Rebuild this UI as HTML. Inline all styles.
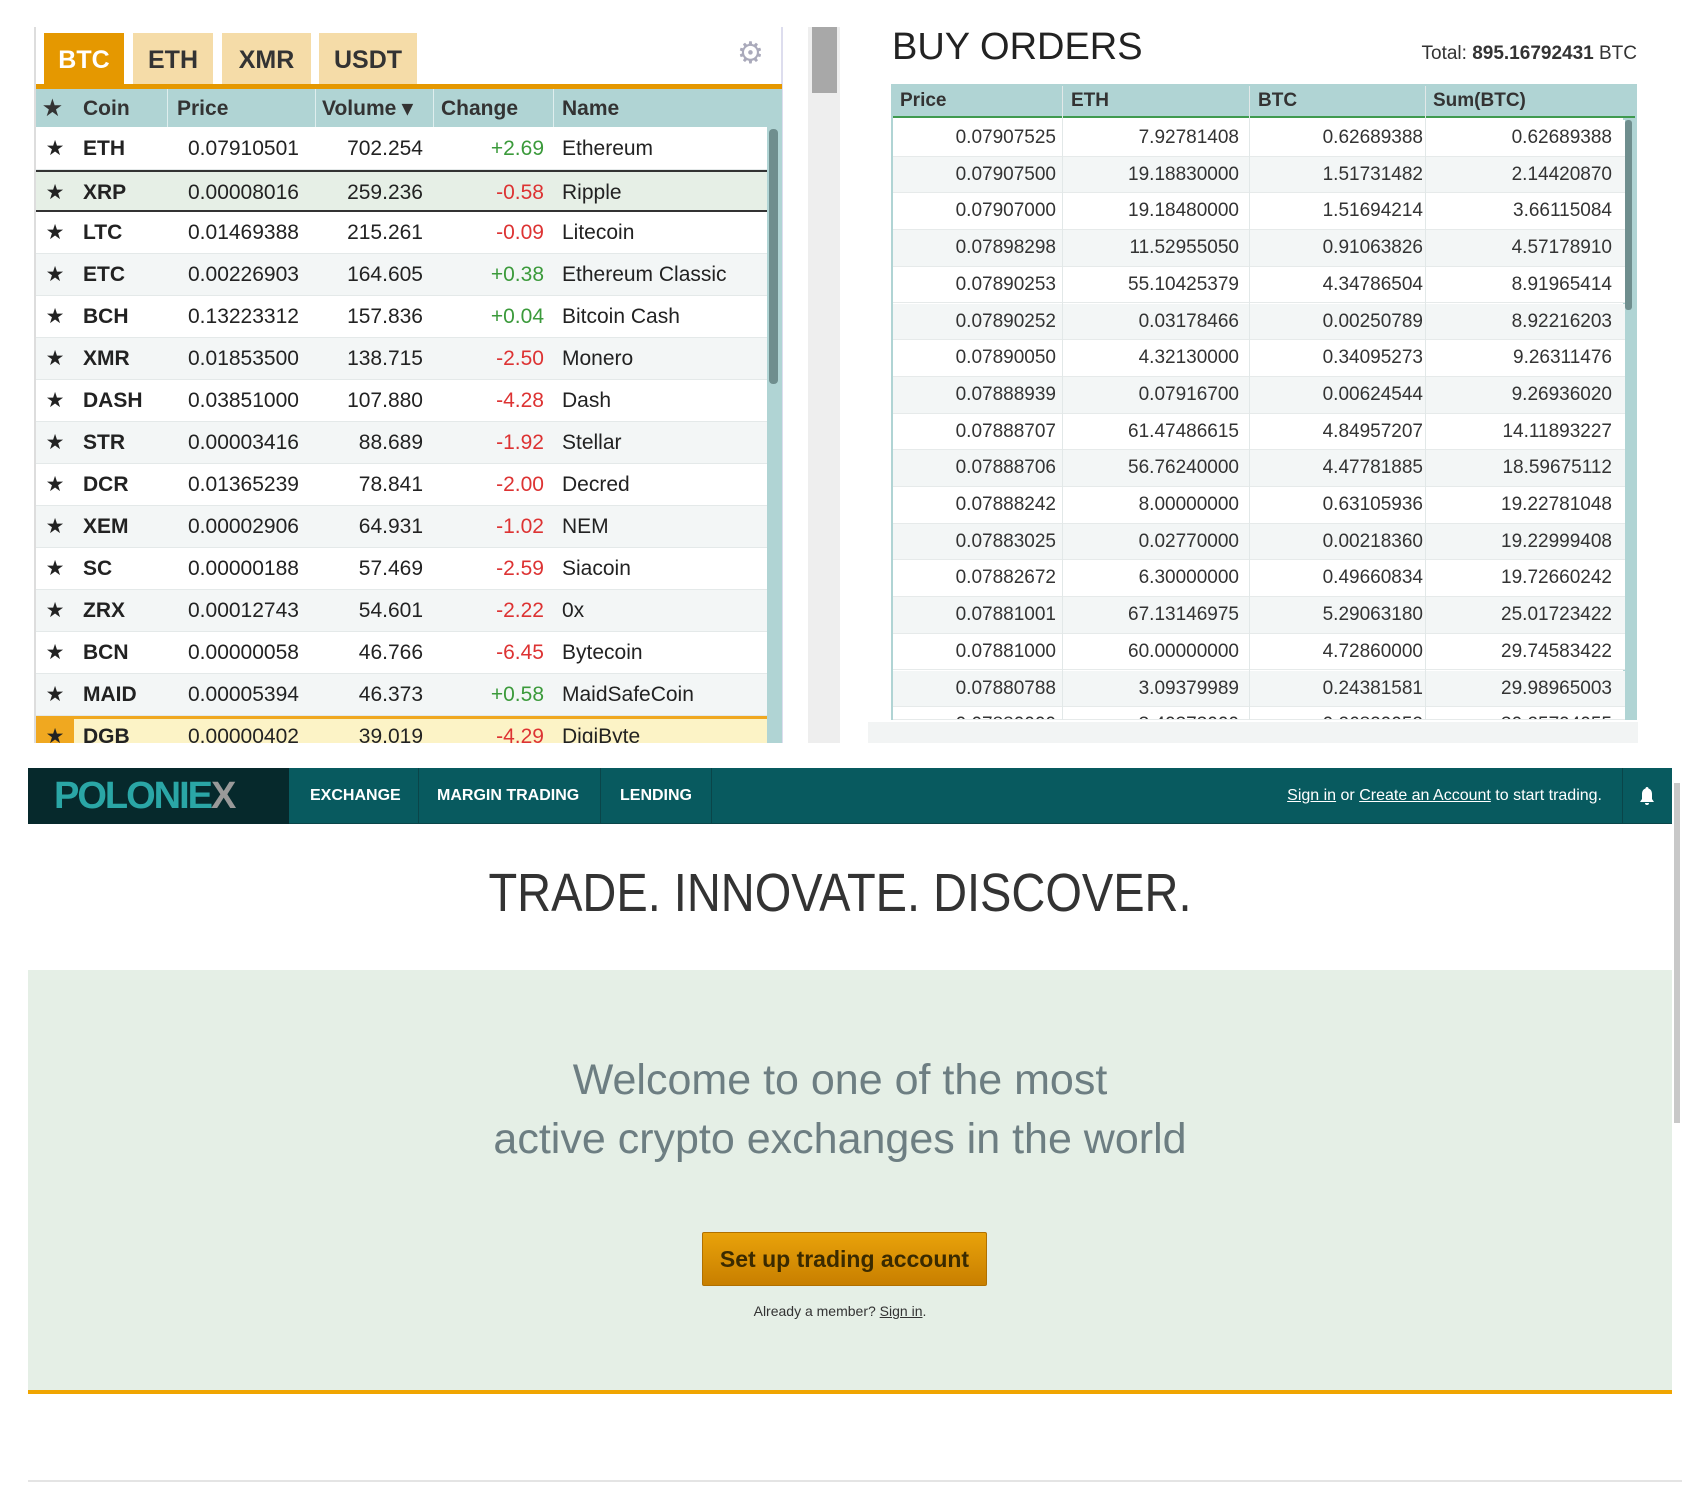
<!DOCTYPE html>
<html><head><meta charset="utf-8"><style>
*{margin:0;padding:0;box-sizing:border-box}
body{width:1702px;height:1507px;background:#fff;font-family:"Liberation Sans",sans-serif;position:relative;overflow:hidden;color:#222}
.abs{position:absolute}
.tab{position:absolute;top:33px;height:52px;background:#f5dca8;color:#333;font-weight:bold;font-size:25px;text-align:center;line-height:54px}
.lrow{position:absolute;left:36px;width:731px;height:42px;font-size:21px;line-height:42px;border-bottom:1px solid #e4e9e9}
.lrow span{position:absolute;top:0}
.c0{left:7px;width:24px;text-align:center}
.c1{left:47px;font-weight:bold}
.c2{left:152px}
.c3{left:240px;width:147px;text-align:right}
.c4{left:400px;width:108px;text-align:right}
.c5{left:526px}
.g{color:#3b9a3b}.r{color:#d33}
.brow{position:absolute;left:893px;width:732px;height:36.7px;font-size:19px;line-height:36px;border-bottom:1px solid #e6eaea;color:#333}
.brow span{position:absolute;top:0;text-align:right}
</style></head><body>
<div class="abs" style="left:34px;top:27px;width:2px;height:716px;background:#ddd"></div>
<div class="abs" style="left:781px;top:27px;width:2px;height:716px;background:#dde"></div>
<div class="tab" style="left:44px;width:80px;background:#e59800;color:#fff">BTC</div>
<div class="tab" style="left:133px;width:80px">ETH</div>
<div class="tab" style="left:222px;width:89px">XMR</div>
<div class="tab" style="left:319px;width:98px">USDT</div>
<div class="abs" style="left:737px;top:36px;font-size:30px;color:#aab">⚙</div>
<div class="abs" style="left:36px;top:84px;width:746px;height:5px;background:#e59800"></div>
<div class="abs" style="left:36px;top:89px;width:746px;height:38px;background:#b0d4d4;font-size:21px;font-weight:bold;color:#333;line-height:40px">
<span class="abs" style="left:7px">★</span><span class="abs" style="left:47px">Coin</span><span class="abs" style="left:141px">Price</span><span class="abs" style="left:286px">Volume ▾</span><span class="abs" style="left:405px">Change</span><span class="abs" style="left:526px">Name</span>
<div class="abs" style="left:131px;top:0;width:1px;height:38px;background:#dfeeee"></div><div class="abs" style="left:279px;top:0;width:1px;height:38px;background:#dfeeee"></div><div class="abs" style="left:397px;top:0;width:1px;height:38px;background:#dfeeee"></div><div class="abs" style="left:517px;top:0;width:1px;height:38px;background:#dfeeee"></div>
</div>
<div class="abs" style="left:767px;top:127px;width:15px;height:616px;background:#b0d4d4"></div>
<div class="abs" style="left:769px;top:129px;width:9px;height:255px;background:#6f8e8e;border-radius:4px"></div>
<div class="lrow" style="top:128px;background:#fff"><span class="c0">★</span><span class="c1">ETH</span><span class="c2">0.07910501</span><span class="c3">702.254</span><span class="c4 g">+2.69</span><span class="c5">Ethereum</span></div>
<div class="lrow" style="top:170px;background:#e6efe6;border-top:2px solid #333;border-bottom:2px solid #333"><span class="c0">★</span><span class="c1">XRP</span><span class="c2">0.00008016</span><span class="c3">259.236</span><span class="c4 r">-0.58</span><span class="c5">Ripple</span></div>
<div class="lrow" style="top:212px;background:#fff"><span class="c0">★</span><span class="c1">LTC</span><span class="c2">0.01469388</span><span class="c3">215.261</span><span class="c4 r">-0.09</span><span class="c5">Litecoin</span></div>
<div class="lrow" style="top:254px;background:#f3f6f6"><span class="c0">★</span><span class="c1">ETC</span><span class="c2">0.00226903</span><span class="c3">164.605</span><span class="c4 g">+0.38</span><span class="c5">Ethereum Classic</span></div>
<div class="lrow" style="top:296px;background:#fff"><span class="c0">★</span><span class="c1">BCH</span><span class="c2">0.13223312</span><span class="c3">157.836</span><span class="c4 g">+0.04</span><span class="c5">Bitcoin Cash</span></div>
<div class="lrow" style="top:338px;background:#f3f6f6"><span class="c0">★</span><span class="c1">XMR</span><span class="c2">0.01853500</span><span class="c3">138.715</span><span class="c4 r">-2.50</span><span class="c5">Monero</span></div>
<div class="lrow" style="top:380px;background:#fff"><span class="c0">★</span><span class="c1">DASH</span><span class="c2">0.03851000</span><span class="c3">107.880</span><span class="c4 r">-4.28</span><span class="c5">Dash</span></div>
<div class="lrow" style="top:422px;background:#f3f6f6"><span class="c0">★</span><span class="c1">STR</span><span class="c2">0.00003416</span><span class="c3">88.689</span><span class="c4 r">-1.92</span><span class="c5">Stellar</span></div>
<div class="lrow" style="top:464px;background:#fff"><span class="c0">★</span><span class="c1">DCR</span><span class="c2">0.01365239</span><span class="c3">78.841</span><span class="c4 r">-2.00</span><span class="c5">Decred</span></div>
<div class="lrow" style="top:506px;background:#f3f6f6"><span class="c0">★</span><span class="c1">XEM</span><span class="c2">0.00002906</span><span class="c3">64.931</span><span class="c4 r">-1.02</span><span class="c5">NEM</span></div>
<div class="lrow" style="top:548px;background:#fff"><span class="c0">★</span><span class="c1">SC</span><span class="c2">0.00000188</span><span class="c3">57.469</span><span class="c4 r">-2.59</span><span class="c5">Siacoin</span></div>
<div class="lrow" style="top:590px;background:#f3f6f6"><span class="c0">★</span><span class="c1">ZRX</span><span class="c2">0.00012743</span><span class="c3">54.601</span><span class="c4 r">-2.22</span><span class="c5">0x</span></div>
<div class="lrow" style="top:632px;background:#fff"><span class="c0">★</span><span class="c1">BCN</span><span class="c2">0.00000058</span><span class="c3">46.766</span><span class="c4 r">-6.45</span><span class="c5">Bytecoin</span></div>
<div class="lrow" style="top:674px;background:#f3f6f6"><span class="c0">★</span><span class="c1">MAID</span><span class="c2">0.00005394</span><span class="c3">46.373</span><span class="c4 g">+0.58</span><span class="c5">MaidSafeCoin</span></div>
<div class="abs" style="left:36px;top:716px;width:731px;height:27px;overflow:hidden;background:#fcf3c6;border-top:3px solid #f0a820">
<div class="lrow" style="left:0;top:-3px;border:0;background:transparent"><span class="c0" style="background:#f0a820;left:0;width:38px">★</span><span class="c1">DGB</span><span class="c2">0.00000402</span><span class="c3">39.019</span><span class="c4 r">-4.29</span><span class="c5">DigiByte</span></div></div>
<div class="abs" style="left:808px;top:27px;width:32px;height:716px;background:#eee"></div>
<div class="abs" style="left:812px;top:27px;width:25px;height:66px;background:#a8a8a8"></div>
<div class="abs" style="left:892px;top:26px;font-size:38px;color:#222">BUY ORDERS</div>
<div class="abs" style="left:1300px;top:43px;width:337px;text-align:right;font-size:19px;color:#333">Total: <b>895.16792431</b> BTC</div>
<div class="abs" style="left:891px;top:84px;width:746px;height:636px;border:2px solid #b0d4d4;border-bottom:0"></div>
<div class="abs" style="left:893px;top:86px;width:742px;height:32px;background:#b0d4d4;border-bottom:2px solid #3f9a4f;font-size:19px;font-weight:bold;color:#333;line-height:30px">
<span class="abs" style="left:7px">Price</span><span class="abs" style="left:178px">ETH</span><span class="abs" style="left:365px">BTC</span><span class="abs" style="left:540px">Sum(BTC)</span></div>
<div class="abs" style="left:1623px;top:118px;width:12px;height:602px;background:#b0d4d4"></div>
<div class="abs" style="left:1625px;top:120px;width:7px;height:190px;background:#6f8e8e;border-radius:3px"></div>
<div id="b"></div>
<div class="abs" style="left:1062px;top:86px;width:1px;height:634px;background:#e2e8e8"></div>
<div class="abs" style="left:1249px;top:86px;width:1px;height:634px;background:#e2e8e8"></div>
<div class="abs" style="left:1425px;top:86px;width:1px;height:634px;background:#e2e8e8"></div>
<div class="abs" style="left:868px;top:722px;width:770px;height:21px;background:#f2f4f4"></div>
<div class="abs" style="left:28px;top:768px;width:1644px;height:56px;background:#085a5f;border-bottom:1px solid #0a4549"></div>
<div class="abs" style="left:28px;top:768px;width:261px;height:56px;background:#06292c;color:#2aa6a6;font-size:38px;font-weight:bold;line-height:56px;padding-left:26px;letter-spacing:-2px">POLONIE<span style="color:#999">X</span></div>
<div class="abs" style="left:418px;top:768px;width:1px;height:56px;background:#0a4549"></div>
<div class="abs" style="left:600px;top:768px;width:1px;height:56px;background:#0a4549"></div>
<div class="abs" style="left:711px;top:768px;width:1px;height:56px;background:#0a4549"></div>
<div class="abs" style="left:1622px;top:768px;width:1px;height:56px;background:#0a4549"></div>
<div class="abs" style="left:310px;top:768px;color:#fff;font-weight:bold;font-size:16px;line-height:56px">EXCHANGE</div>
<div class="abs" style="left:437px;top:768px;color:#fff;font-weight:bold;font-size:16px;line-height:56px">MARGIN TRADING</div>
<div class="abs" style="left:620px;top:768px;color:#fff;font-weight:bold;font-size:16px;line-height:56px">LENDING</div>
<div class="abs" style="left:1200px;top:768px;width:402px;text-align:right;color:#fff;font-size:16px;line-height:56px"><u>Sign in</u> or <u>Create an Account</u> to start trading.</div>
<svg class="abs" style="left:1638px;top:786px" width="18" height="20" viewBox="0 0 18 20"><path d="M9 1c-1 0-1.5.8-1.5 1.5C5 3.3 4 5.5 4 8v5l-2 3h14l-2-3V8c0-2.5-1-4.7-3.5-5.5C10.5 1.8 10 1 9 1zM7 17a2 2 0 0 0 4 0z" fill="#fff"/></svg>
<div class="abs" style="left:1674px;top:783px;width:6px;height:340px;background:#c8c8c8"></div>
<div class="abs" style="left:18px;top:862px;width:1644px;text-align:center;font-size:54px;color:#333;transform:scaleX(0.87)">TRADE. INNOVATE. DISCOVER.</div>
<div class="abs" style="left:28px;top:970px;width:1644px;height:420px;background:#e5efe6"></div>
<div class="abs" style="left:28px;top:1390px;width:1644px;height:4px;background:#f0a500"></div>
<div class="abs" style="left:18px;top:1051px;width:1644px;text-align:center;font-size:43px;line-height:59px;color:#6d7e82">Welcome to one of the most<br>active crypto exchanges in the world</div>
<div class="abs" style="left:702px;top:1232px;width:285px;height:54px;background:linear-gradient(#e9a20a,#c87f00);border:1px solid #b07000;border-radius:2px;text-align:center;line-height:52px;font-size:23px;font-weight:bold;color:#3a2a00">Set up trading account</div>
<div class="abs" style="left:18px;top:1303px;width:1644px;text-align:center;font-size:14px;color:#333">Already a member? <u>Sign in</u>.</div>
<div class="abs" style="left:28px;top:1480px;width:1654px;height:2px;background:#e4e4e4"></div>
<script>
var d=[["0.07907525","7.92781408","0.62689388","0.62689388"],["0.07907500","19.18830000","1.51731482","2.14420870"],["0.07907000","19.18480000","1.51694214","3.66115084"],["0.07898298","11.52955050","0.91063826","4.57178910"],["0.07890253","55.10425379","4.34786504","8.91965414"],["0.07890252","0.03178466","0.00250789","8.92216203"],["0.07890050","4.32130000","0.34095273","9.26311476"],["0.07888939","0.07916700","0.00624544","9.26936020"],["0.07888707","61.47486615","4.84957207","14.11893227"],["0.07888706","56.76240000","4.47781885","18.59675112"],["0.07888242","8.00000000","0.63105936","19.22781048"],["0.07883025","0.02770000","0.00218360","19.22999408"],["0.07882672","6.30000000","0.49660834","19.72660242"],["0.07881001","67.13146975","5.29063180","25.01723422"],["0.07881000","60.00000000","4.72860000","29.74583422"],["0.07880788","3.09379989","0.24381581","29.98965003"],["0.07880000","3.40373000","0.26829052","30.25794055"]];
var h="";for(var i=0;i<d.length;i++){var t=120+i*36.7;var hh=i==16?(720-t):36.7;
h+='<div class="brow" style="top:'+t+'px;height:'+hh+'px;overflow:hidden;background:'+(i%2?'#f3f6f6':'#fff')+'"><span style="left:0;width:163px">'+d[i][0]+'</span><span style="left:170px;width:176px">'+d[i][1]+'</span><span style="left:356px;width:174px">'+d[i][2]+'</span><span style="left:533px;width:186px">'+d[i][3]+'</span></div>';}
document.getElementById('b').outerHTML=h;
</script>
</body></html>
